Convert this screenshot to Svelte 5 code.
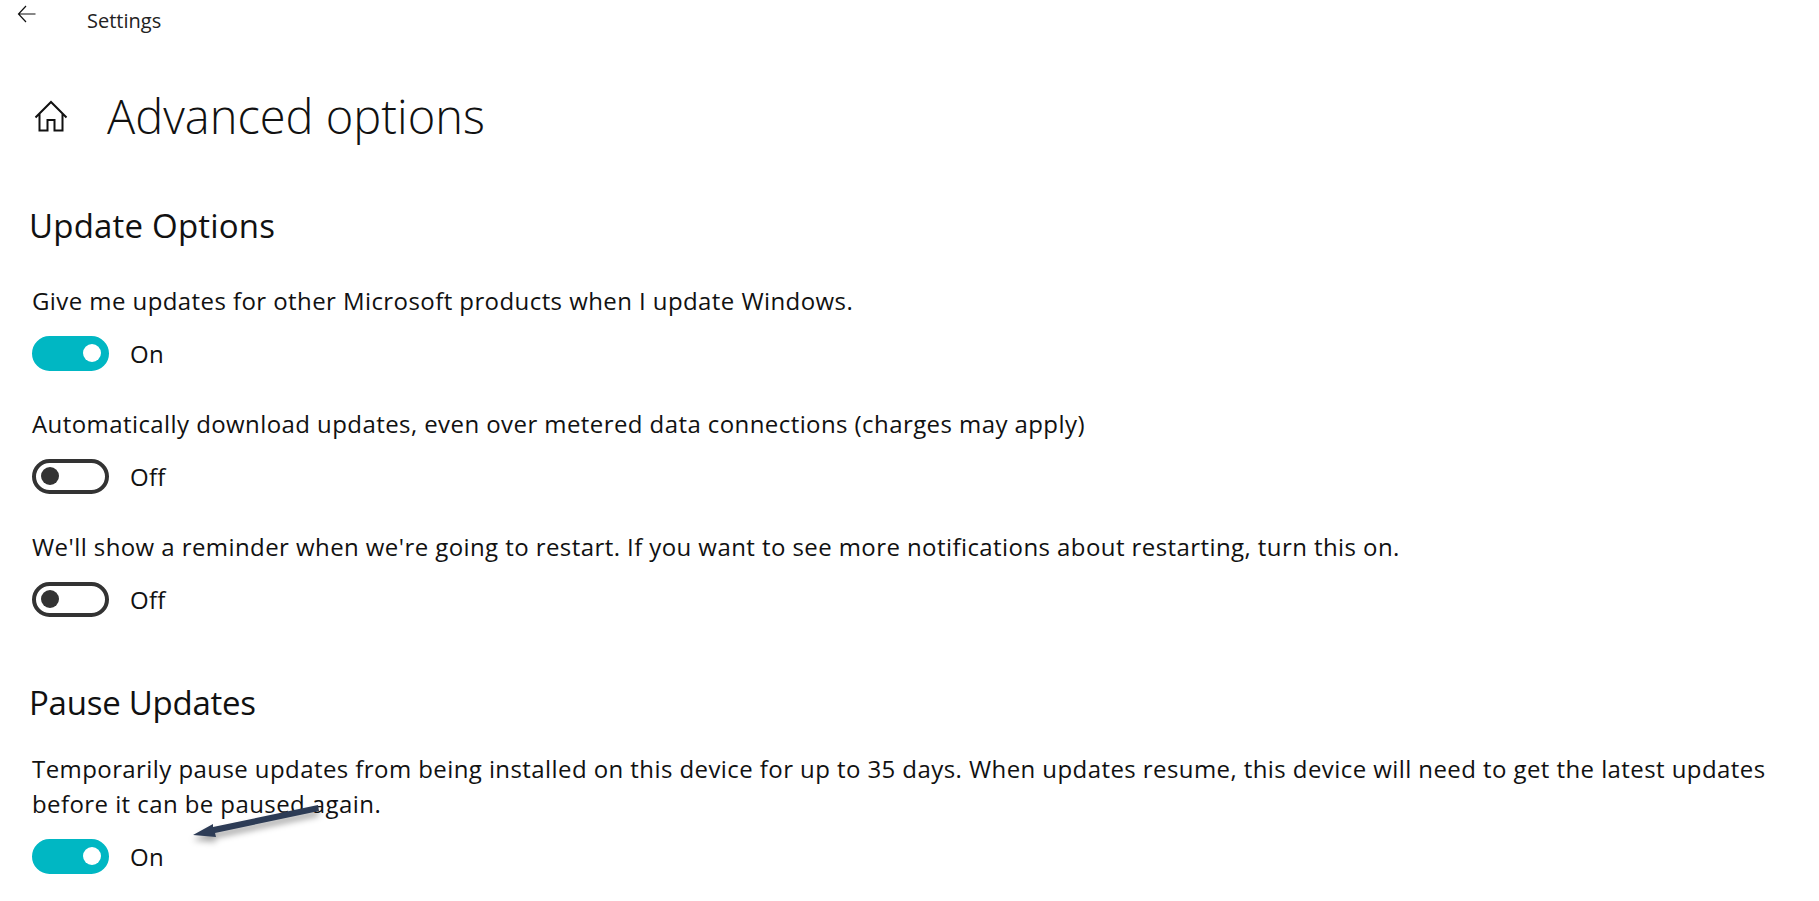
<script lang="ts">
	const groups = [
		{
			title: 'Update Options',
			rows: [
				{ text: 'Give me updates for other Microsoft products when I update Windows.', on: true },
				{ text: 'Automatically download updates, even over metered data connections (charges may apply)', on: false },
				{ text: "We'll show a reminder when we're going to restart. If you want to see more notifications about restarting, turn this on.", on: false }
			]
		},
		{
			title: 'Pause Updates',
			rows: [
				{
					text: 'Temporarily pause updates from being installed on this device for up to 35 days. When updates resume, this device will need to get the latest updates before it can be paused again.',
					on: true
				}
			]
		}
	];
</script>

<div class="page">
	<header class="topbar">
		<svg class="back" width="20" height="18" viewBox="0 0 20 18" fill="none" stroke="#111" stroke-width="1.200">
			<path d="M18.500 9H1.500M9 1L1.500 9l7.500 8" />
		</svg>
		<span class="app-name">Settings</span>
	</header>

	<div class="heading">
		<svg class="home" width="34" height="32" viewBox="0 0 34 32" fill="none" stroke="#111" stroke-width="2">
			<path d="M1.500 17.500L17 2l15.500 15.500M5.500 14v16.500h8V20h7v10.500h8V14" />
		</svg>
		<h1>Advanced options</h1>
	</div>

	{#each groups as group}
		<section>
			<h2>{group.title}</h2>
			{#each group.rows as row}
				<div class="row">
					<p>{row.text}</p>
					<div class="switch-line">
						<span class="switch" class:on={row.on}><span class="knob"></span></span>
						<span class="state">{row.on ? 'On' : 'Off'}</span>
					</div>
				</div>
			{/each}
		</section>
	{/each}

	<svg class="arrow" width="150" height="50" viewBox="0 0 150 50">
		<path d="M137 4L32 26l0 -3L12 34l23 2l-1 -4L138 10z" fill="#2d3c56" />
	</svg>
</div>

<style>
	:global(body) {
		margin: 0;
		background: #fff;
	}

	.page {
		position: relative;
		width: 1819px;
		height: 901px;
		overflow: hidden;
		box-sizing: border-box;
		color: #111;
		font-family: 'Open Sans', 'Noto Sans', sans-serif;
	}

	.topbar {
		display: flex;
		align-items: center;
		height: 40px;
		padding-left: 17px;
	}

	.back {
		margin-top: -12px;
	}

	.app-name {
		margin-left: 50px;
		font-size: 20px;
		color: #222;
	}

	.heading {
		display: flex;
		align-items: center;
		height: 70px;
		margin-top: 41px;
		padding-left: 34px;
	}

	h1 {
		margin: 0 0 0 39px;
		font-size: 47px;
		font-weight: 300;
		line-height: 70px;
	}

	section {
		padding-left: 32px;
	}

	h2 {
		margin: 0 0 0 -3px;
		font-size: 33px;
		font-weight: 400;
		letter-spacing: 0.2px;
		line-height: 44px;
	}

	section:nth-of-type(1) {
		margin-top: 53px;
	}

	section:nth-of-type(2) {
		margin-top: 29px;
	}

	section:nth-of-type(2) h2 {
		letter-spacing: -0.25px;
	}

	.row + .row {
		margin-top: 0;
	}

	h2 + .row {
		margin-top: 35px;
	}

	section:nth-of-type(2) h2 + .row {
		margin-top: 26px;
	}

	p {
		margin: 0;
		width: 1770px;
		font-size: 24px;
		letter-spacing: 0.42px;
		line-height: 35px;
	}

	.switch-line {
		display: flex;
		align-items: center;
		height: 36px;
		margin-top: 17px;
		padding-bottom: 35px;
	}

	.switch {
		display: flex;
		align-items: center;
		width: 77px;
		height: 35px;
		box-sizing: border-box;
		padding-left: 5px;
		border: 4px solid #333;
		border-radius: 18px;
	}

	.switch .knob {
		width: 18px;
		height: 18px;
		border-radius: 50%;
		background: #333;
	}

	.switch.on {
		justify-content: flex-end;
		padding: 0 4px 0 0;
		border-color: #00b7c3;
		background: #00b7c3;
	}

	.switch.on .knob {
		background: #fff;
	}

	.state {
		margin-left: 21px;
		font-size: 24px;
		letter-spacing: 0.3px;
	}

	.arrow {
		position: absolute;
		left: 181px;
		top: 801px;
		filter: drop-shadow(0 5px 3px rgba(0, 0, 0, 0.35));
	}
</style>
